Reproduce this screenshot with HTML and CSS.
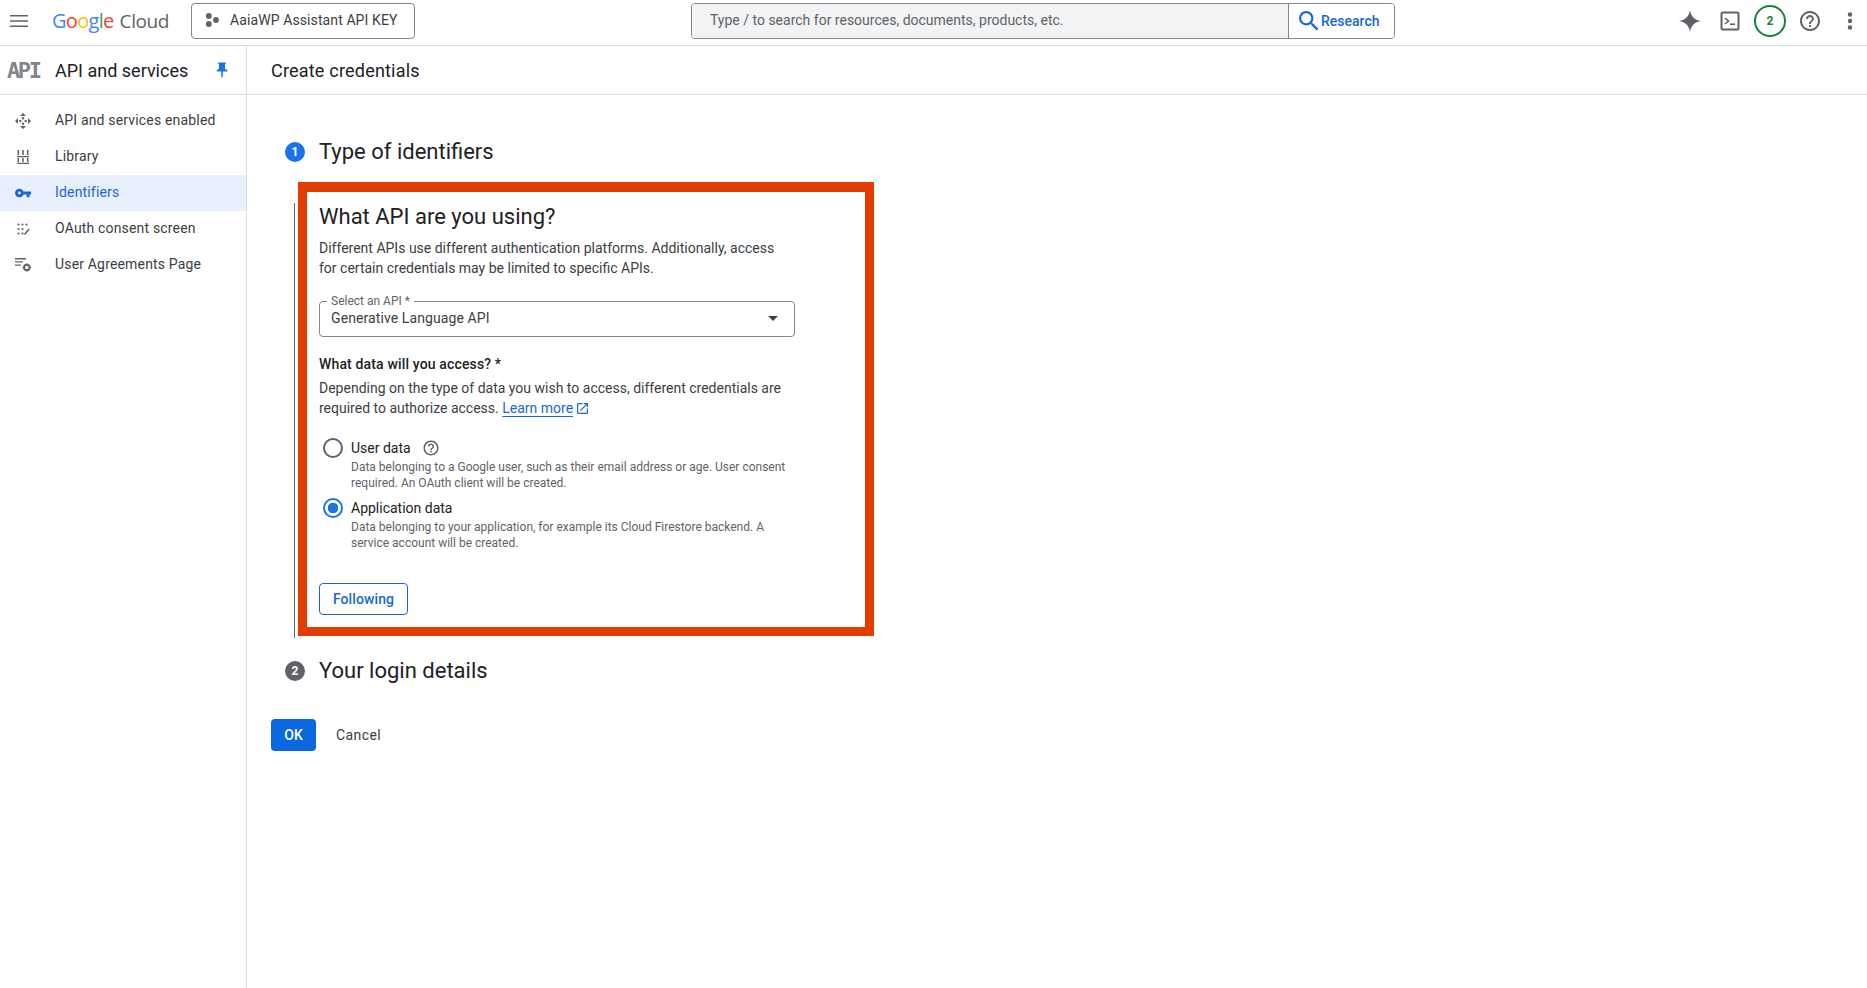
FILE: index.html
```html
<!DOCTYPE html>
<html lang="en">
<head>
<meta charset="utf-8">
<title>Create credentials</title>
<link rel="stylesheet" href="styles.css">
</head>
<body>
<div class="app">
  <header class="topbar">
    <button class="menu-btn" aria-label="Menu">
      <svg width="18" height="12" viewBox="0 0 18 12"><path d="M0 0h18v1.6H0zM0 5.2h18v1.6H0zM0 10.4h18V12H0z" fill="#5f6368"/></svg>
    </button>
    <div class="logo"><span class="g-b">G</span><span class="g-r">o</span><span class="g-y">o</span><span class="g-b">g</span><span class="g-g">l</span><span class="g-r">e</span><span class="logo-cloud">Cloud</span></div>
    <button class="project">
      <svg width="14" height="14" viewBox="0 0 14 14"><circle cx="3.8" cy="3" r="2.9" fill="#5f6368"/><circle cx="3.8" cy="11" r="2.9" fill="#5f6368"/><circle cx="11" cy="7" r="2.9" fill="#5f6368"/></svg>
      <span>AaiaWP Assistant API KEY</span>
    </button>
    <div class="search">
      <div class="search-input">Type / to search for resources, documents, products, etc.</div>
      <button class="search-btn">
        <svg width="20" height="20" viewBox="3 3 18 18"><path d="M15.5 14h-.79l-.28-.27A6.471 6.471 0 0 0 16 9.5 6.5 6.5 0 1 0 9.5 16c1.61 0 3.09-.59 4.23-1.57l.27.28v.79l5 4.99L20.49 19l-4.99-5zm-6 0C7.01 14 5 11.99 5 9.5S7.01 5 9.5 5 14 7.01 14 9.5 11.99 14 9.5 14z" fill="#1967d2"/></svg>
        <span>Research</span>
      </button>
    </div>
    <div class="top-icons">
      <span class="top-icon"><svg width="24" height="24" viewBox="0 0 24 24"><path d="M12 1c1 6.5 4.500 10 11 11-6.500 1-10 4.500-11 11-1-6.500-4.500-10-11-11 6.500-1 10-4.500 11-11z" fill="#5f6368"/></svg></span>
      <span class="top-icon"><svg width="20" height="20" viewBox="0 0 20 20"><rect x="1.500" y="1.500" width="17" height="17" rx="1.500" fill="none" stroke="#5f6368" stroke-width="2"/><path d="M5 7l3.500 3L5 13" fill="none" stroke="#5f6368" stroke-width="1.600"/><path d="M10 13.200h5" stroke="#5f6368" stroke-width="1.600"/></svg></span>
      <span class="badge">2</span>
      <span class="top-icon"><svg width="24" height="24" viewBox="0 0 24 24"><path d="M11 18h2v-2h-2v2zm1-16C6.480 2 2 6.480 2 12s4.480 10 10 10 10-4.480 10-10S17.520 2 12 2zm0 18c-4.410 0-8-3.590-8-8s3.590-8 8-8 8 3.590 8 8-3.590 8-8 8zm0-14c-2.210 0-4 1.790-4 4h2c0-1.100.9-2 2-2s2 .9 2 2c0 2-3 1.750-3 5h2c0-2.250 3-2.500 3-5 0-2.210-1.790-4-4-4z" fill="#5f6368"/></svg></span>
      <span class="dots"><svg width="6" height="18" viewBox="0 0 6 18"><circle cx="3" cy="2.500" r="2.200" fill="#5f6368"/><circle cx="3" cy="9" r="2.200" fill="#5f6368"/><circle cx="3" cy="15.500" r="2.200" fill="#5f6368"/></svg></span>
    </div>
  </header>

  <div class="body">
    <aside class="sidebar">
      <div class="side-head">
        <span class="api-mark">API</span>
        <span class="side-title">API and services</span>
        <svg class="pin" width="18" height="18" viewBox="0 0 24 24"><path d="M16 9V4h1V2H7v2h1v5c0 1.660-1.340 3-3 3v2h5.970v7l1 1 1-1v-7H19v-2c-1.660 0-3-1.340-3-3z" fill="#1a73e8"/></svg>
      </div>
      <nav class="nav">
        <a class="nav-item">
          <svg class="nav-icon" width="16" height="16" viewBox="0 0 16 16" fill="#5f6368"><path d="M8 0l3 3H5zM8 16l-3-3h6zM0 8l3-3v6zM16 8l-3 3V5z"/><circle cx="8" cy="5.300" r="1.200"/><circle cx="8" cy="10.700" r="1.200"/><circle cx="5.300" cy="8" r="1.200"/><circle cx="10.700" cy="8" r="1.200"/></svg>
          <span>API and services enabled</span>
        </a>
        <a class="nav-item">
          <svg class="nav-icon" width="14" height="14" viewBox="0 0 14 14" fill="#5f6368"><path d="M1.500 0h1.600v5H1.500zM6.200 0h1.600v5H6.200zM10.900 0h1.600v5h-1.600zM1.500 8h1.600v4H1.500zM6.200 8h1.600v4H6.200zM10.900 8h1.600v4h-1.600zM1 6h12v1.300H1zM1 12.700h12V14H1z"/></svg>
          <span>Library</span>
        </a>
        <a class="nav-item is-active">
          <svg class="nav-icon" width="16" height="16" viewBox="1 3 22 18"><path d="M12.650 10C11.830 7.670 9.610 6 7 6c-3.310 0-6 2.690-6 6s2.690 6 6 6c2.610 0 4.830-1.670 5.650-4H17v4h4v-4h2v-4H12.650zM7 14c-1.100 0-2-.9-2-2s.9-2 2-2 2 .9 2 2-.9 2-2 2z" fill="#1967d2"/></svg>
          <span>Identifiers</span>
        </a>
        <a class="nav-item">
          <svg class="nav-icon" width="13" height="13" viewBox="0 0 13 13" fill="#5f6368"><circle cx="1.500" cy="1.500" r="1.100"/><circle cx="5.500" cy="1.500" r="1.100"/><circle cx="9.500" cy="1.500" r="1.100"/><circle cx="1.500" cy="6" r="1.100"/><circle cx="5.500" cy="6" r="1.100"/><circle cx="1.500" cy="10.500" r="1.100"/><circle cx="5.500" cy="10.500" r="1.100"/><path d="M7.500 11.500l4.500-5.500" fill="none" stroke="#5f6368" stroke-width="1.500"/></svg>
          <span>OAuth consent screen</span>
        </a>
        <a class="nav-item">
          <svg class="nav-icon" width="16" height="14" viewBox="0 0 16 14" fill="#5f6368"><path d="M0 0h11v1.400H0zM0 3.200h8v1.400H0zM0 6.400h6v1.400H0z"/><circle cx="11.800" cy="9.500" r="2.800" fill="none" stroke="#5f6368" stroke-width="2"/><path d="M11 5.500h1.600v1.300H11zM11 12.200h1.600v1.300H11zM7.800 8.700h1.300v1.600H7.800zM14.500 8.700h1.300v1.600h-1.300z"/></svg>
          <span>User Agreements Page</span>
        </a>
      </nav>
    </aside>

    <main class="main">
      <div class="page-head">Create credentials</div>
      <div class="content">
        <div class="step-head">
          <span class="step-num is-current">1</span>
          <h2 class="step-title">Type of identifiers</h2>
        </div>
        <section class="step-body">
          <h3 class="form-title">What API are you using?</h3>
          <p class="intro">Different APIs use different authentication platforms. Additionally, access<br>for certain credentials may be limited to specific APIs.</p>

          <div class="select">
            <span class="select-label">Select an API *</span>
            <span class="select-value">Generative Language API</span>
            <span class="select-arrow"></span>
          </div>

          <div class="q-title">What data will you access? *</div>
          <p class="q-text">Depending on the type of data you wish to access, different credentials are<br>required to authorize access. <a class="link">Learn more</a>
            <svg class="ext" width="11" height="11" viewBox="3 3 18 18"><path d="M19 19H5V5h7V3H5a2 2 0 0 0-2 2v14a2 2 0 0 0 2 2h14c1.100 0 2-.9 2-2v-7h-2v7zM14 3v2h3.590l-9.830 9.830 1.410 1.410L19 6.410V10h2V3h-7z" fill="#1967d2"/></svg>
          </p>

          <div class="radio-row first">
            <span class="radio"></span>
            <div class="radio-copy">
              <div class="radio-label">User data
                <svg class="hint" width="18" height="18" viewBox="0 0 24 24"><path d="M11 18h2v-2h-2v2zm1-16C6.480 2 2 6.480 2 12s4.480 10 10 10 10-4.480 10-10S17.520 2 12 2zm0 18c-4.410 0-8-3.590-8-8s3.590-8 8-8 8 3.590 8 8-3.590 8-8 8zm0-14c-2.210 0-4 1.790-4 4h2c0-1.100.9-2 2-2s2 .9 2 2c0 2-3 1.750-3 5h2c0-2.250 3-2.500 3-5 0-2.210-1.790-4-4-4z" fill="#5f6368"/></svg>
              </div>
              <div class="radio-desc">Data belonging to a Google user, such as their email address or age. User consent<br>required. An OAuth client will be created.</div>
            </div>
          </div>
          <div class="radio-row">
            <span class="radio is-on"></span>
            <div class="radio-copy">
              <div class="radio-label">Application data</div>
              <div class="radio-desc">Data belonging to your application, for example its Cloud Firestore backend. A<br>service account will be created.</div>
            </div>
          </div>

          <button class="btn-outline">Following</button>
        </section>

        <div class="step-head second">
          <span class="step-num">2</span>
          <h2 class="step-title">Your login details</h2>
        </div>

        <div class="actions">
          <button class="btn-primary">OK</button>
          <button class="btn-text">Cancel</button>
        </div>
      </div>
      <div class="highlight"></div>
    </main>
  </div>
</div>
</body>
</html>
```

FILE: styles.css
```css
* { box-sizing: border-box; }
html, body { margin: 0; height: 100%; background: #fff; }
body { font-family: Roboto, "Liberation Sans", Arial, sans-serif; font-size: 14px; color: #202124; overflow: hidden; }
button { font-family: inherit; cursor: pointer; }
h2, h3, p { margin: 0; font-weight: 400; }

.app { display: flex; flex-direction: column; height: 988px; }

/* top bar */
.topbar { display: flex; align-items: center; height: 46px; border-bottom: 1px solid #dadce0; flex: none; padding: 0 0 4px 10px; }
.topbar > * { flex: none; }
.menu-btn { display: flex; border: 0; padding: 0; background: none; width: 18px; }
.logo { margin-left: 24px; width: 139px; font-family: "Open Sans", Roboto, sans-serif; font-size: 20px; letter-spacing: -0.7px; white-space: nowrap; line-height: 1; }
.g-b { color: #4285f4; } .g-r { color: #ea4335; } .g-y { color: #fbbc04; } .g-g { color: #34a853; }
.logo-cloud { color: #5f6368; margin-left: 6px; font-size: 19px; letter-spacing: -0.4px; }
.project { display: flex; align-items: center; gap: 11px; width: 224px; height: 36px; padding: 0 0 2px 13px; background: #fff; border: 1px solid #80868b; border-radius: 4px; font-size: 14px; letter-spacing: 0.1px; color: #3c4043; white-space: nowrap; }
.search { display: flex; width: 704px; height: 36px; margin-left: 276px; border: 1px solid #80868b; border-radius: 4px; overflow: hidden; }
.search-input { flex: 1; display: flex; align-items: center; padding: 0 0 2px 18px; background: #f1f3f4; border-right: 1px solid #80868b; color: #5f6368; font-size: 14px; }
.search-btn { display: flex; align-items: center; gap: 2px; width: 105px; padding: 0 0 0 10px; border: 0; background: #fff; color: #1967d2; font-size: 14px; font-weight: 500; }
.top-icons { margin-left: 275px; display: flex; align-items: center; }
.top-icon { display: flex; align-items: center; justify-content: center; width: 40px; height: 40px; }
.dots { display: flex; align-items: center; justify-content: center; width: 20px; height: 40px; margin-left: 10px; }
.badge { display: flex; align-items: center; justify-content: center; width: 32px; height: 32px; margin: 0 4px; border: 2px solid #188038; border-radius: 50%; color: #188038; font-size: 12px; font-weight: 700; }

/* shell */
.body { flex: 1; display: flex; min-height: 0; }

/* sidebar */
.sidebar { width: 247px; flex: none; border-right: 1px solid #dadce0; }
.side-head { display: flex; align-items: center; height: 49px; border-bottom: 1px solid #dadce0; padding-left: 7px; }
.api-mark { width: 48px; font-family: "DejaVu Sans Mono", "Liberation Mono", monospace; font-size: 22px; font-weight: 700; letter-spacing: -2.4px; color: #80868b; }
.side-title { font-size: 18px; color: #202124; }
.pin { margin-left: 25px; }
.nav { padding-top: 8px; }
.nav-item { display: grid; grid-template-columns: 46px 191px; column-gap: 9px; align-items: center; height: 36px; color: #3c4043; letter-spacing: 0.17px; white-space: nowrap; }
.nav-icon { justify-self: center; }
.nav-item span { padding-bottom: 2px; }
.is-active { background: #e8f0fe; color: #1967d2; }

/* main */
.main { flex: 1; position: relative; min-width: 0; }
.page-head { display: flex; align-items: center; height: 49px; padding-left: 24px; border-bottom: 1px solid #dadce0; font-size: 18px; letter-spacing: 0.2px; }
.content { padding: 41px 0 0 24px; }
.step-head { display: flex; align-items: center; height: 32px; padding-left: 14px; }
.step-num { display: flex; align-items: center; justify-content: center; width: 20px; height: 20px; margin-right: 14px; border-radius: 50%; background: #5f6368; color: #fff; font-size: 12px; font-weight: 700; }
.step-num.is-current { background: #1a73e8; }
.step-title { font-size: 22px; line-height: 32px; color: #202124; }
.step-head.second { margin-top: 17px; }

.step-body { margin: 35px 0 0 23px; padding: 0 0 23px 24px; border-left: 1px solid #5f6368; }
.form-title { font-size: 22px; line-height: 28px; color: #202124; }
.intro { margin-top: 7px; line-height: 20px; color: #3c4043; }

.select { position: relative; display: flex; align-items: center; width: 476px; height: 36px; margin-top: 23px; padding: 0 0 2px 11px; border: 1px solid #80868b; border-radius: 4px; }
.select-label { position: absolute; left: 7px; top: -8px; padding: 0 4px; background: #fff; font-size: 12px; line-height: 14px; color: #5f6368; }
.select-value { color: #3c4043; letter-spacing: 0.1px; }
.select-arrow { position: absolute; right: 16px; top: 14px; border-left: 5px solid transparent; border-right: 5px solid transparent; border-top: 5px solid #3c4043; }

.q-title { margin-top: 17px; line-height: 20px; font-weight: 500; color: #202124; letter-spacing: 0.15px; }
.q-text { margin-top: 4px; line-height: 20px; color: #3c4043; }
.link { color: #1967d2; text-decoration: underline; text-underline-offset: 3px; }
.ext { vertical-align: -1px; }

.radio-row { display: flex; margin-top: 7px; padding-left: 4px; }
.radio-row.first { margin-top: 20px; }
.radio { flex: none; width: 20px; height: 20px; margin-right: 8px; border: 2px solid #5f6368; border-radius: 50%; }
.radio.is-on { border-color: #1a73e8; background: radial-gradient(circle, #1a73e8 0 5px, #fff 5.500px); }
.radio-label { display: flex; align-items: center; height: 20px; line-height: 20px; color: #202124; }
.hint { margin-left: 11px; }
.radio-desc { margin-top: 1px; font-size: 12px; line-height: 16px; color: #5f6368; }

.btn-outline { display: block; width: 89px; height: 32px; margin-top: 32px; padding: 0; border: 1px solid #1967d2; border-radius: 4px; background: #fff; color: #1967d2; font-size: 14px; font-weight: 500; letter-spacing: 0.1px; }

.actions { display: flex; align-items: center; margin-top: 32px; }
.btn-primary { width: 45px; height: 32px; padding: 0; border: 0; border-radius: 4px; background: #0b67e0; color: #fff; font-size: 14px; font-weight: 500; }
.btn-text { margin-left: 20px; padding: 0; border: 0; background: none; color: #3c4043; font-size: 14px; font-weight: 400; letter-spacing: 0.4px; }

/* annotation drawn over the form */
.highlight { position: absolute; left: 51px; top: 136px; width: 576px; height: 454px; border: solid #e23d00; border-width: 10px 9px 9px; pointer-events: none; }
```
